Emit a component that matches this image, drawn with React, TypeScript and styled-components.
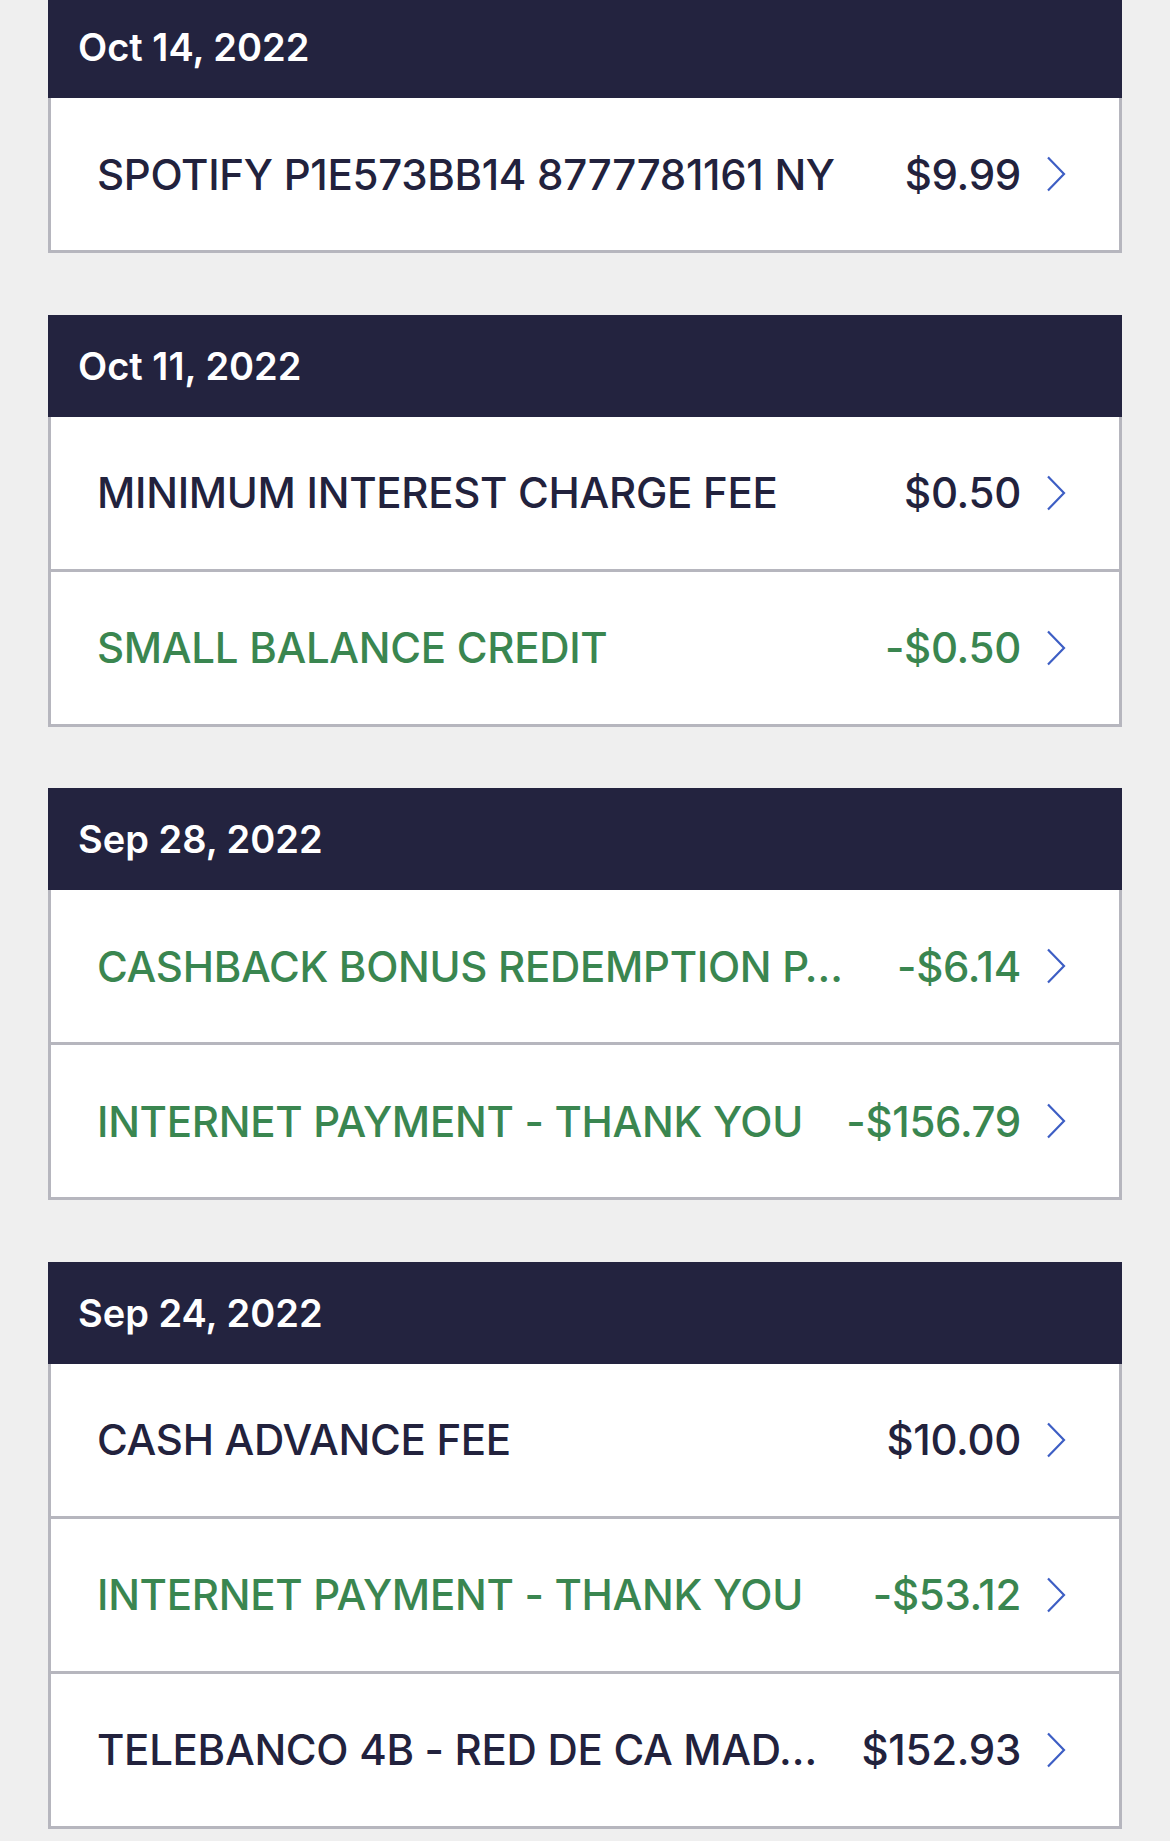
import styled, { createGlobalStyle } from 'styled-components';

const GlobalStyle = createGlobalStyle`
  html, body {
    margin: 0;
    padding: 0;
    background: #efefef;
  }
  body {
    font-family: Inter, "Noto Sans", "Liberation Sans", sans-serif;
    -webkit-font-smoothing: antialiased;
  }
`;

const Page = styled.div`
  display: flex;
  flex-direction: column;
  gap: 61.5px;
  padding: 0 48px 40px;
  margin-top: -4px;
`;

const Group = styled.section`
  display: flex;
  flex-direction: column;
`;

const DateBar = styled.div`
  height: 102px;
  display: flex;
  align-items: center;
  padding-left: 30px;
  background: #23233f;
  color: #ffffff;
  font-size: 38px;
  font-weight: 600;
`;

const Rows = styled.div`
  display: flex;
  flex-direction: column;
  border-left: 3px solid #b6b6be;
  border-right: 3px solid #b6b6be;
  background: #ffffff;
`;

const Row = styled.div<{ $credit?: boolean }>`
  height: 152px;
  display: flex;
  align-items: center;
  padding: 0 53px 0 46px;
  border-bottom: 3px solid #b6b6be;
  color: ${p => (p.$credit ? '#3a8650' : '#22223d')};
  font-size: 42px;
  letter-spacing: -0.3px;
  font-weight: 500;
`;

const Name = styled.span`
  flex: 1;
  min-width: 0;
  white-space: nowrap;
  overflow: hidden;
  text-overflow: ellipsis;
`;

const Amount = styled.span`
  margin-left: 30px;
  white-space: nowrap;
`;

const Chevron = styled.svg`
  flex: none;
  width: 20px;
  height: 36px;
  margin-left: 25px;
`;

type Txn = { name: string; amount: string; credit?: boolean };

const groups: { date: string; items: Txn[] }[] = [
  {
    date: 'Oct 14, 2022',
    items: [{ name: 'SPOTIFY P1E573BB14 8777781161 NY', amount: '$9.99' }],
  },
  {
    date: 'Oct 11, 2022',
    items: [
      { name: 'MINIMUM INTEREST CHARGE FEE', amount: '$0.50' },
      { name: 'SMALL BALANCE CREDIT', amount: '-$0.50', credit: true },
    ],
  },
  {
    date: 'Sep 28, 2022',
    items: [
      { name: 'CASHBACK BONUS REDEMPTION P…', amount: '-$6.14', credit: true },
      { name: 'INTERNET PAYMENT - THANK YOU', amount: '-$156.79', credit: true },
    ],
  },
  {
    date: 'Sep 24, 2022',
    items: [
      { name: 'CASH ADVANCE FEE', amount: '$10.00' },
      { name: 'INTERNET PAYMENT - THANK YOU', amount: '-$53.12', credit: true },
      { name: 'TELEBANCO 4B - RED DE CA MAD…', amount: '$152.93' },
    ],
  },
];

function App() {
  return (
    <>
      <GlobalStyle />
      <Page>
        {groups.map(g => (
          <Group key={g.date}>
            <DateBar>{g.date}</DateBar>
            <Rows>
              {g.items.map((t, i) => (
                <Row key={i} $credit={t.credit}>
                  <Name>{t.name}</Name>
                  <Amount>{t.amount}</Amount>
                  <Chevron viewBox="0 0 20 36" fill="none">
                    <path d="M2 1.5 L18 18 L2 34.5" stroke="#3d5ec4" strokeWidth="2.2" />
                  </Chevron>
                </Row>
              ))}
            </Rows>
          </Group>
        ))}
      </Page>
    </>
  );
}

export default App;
